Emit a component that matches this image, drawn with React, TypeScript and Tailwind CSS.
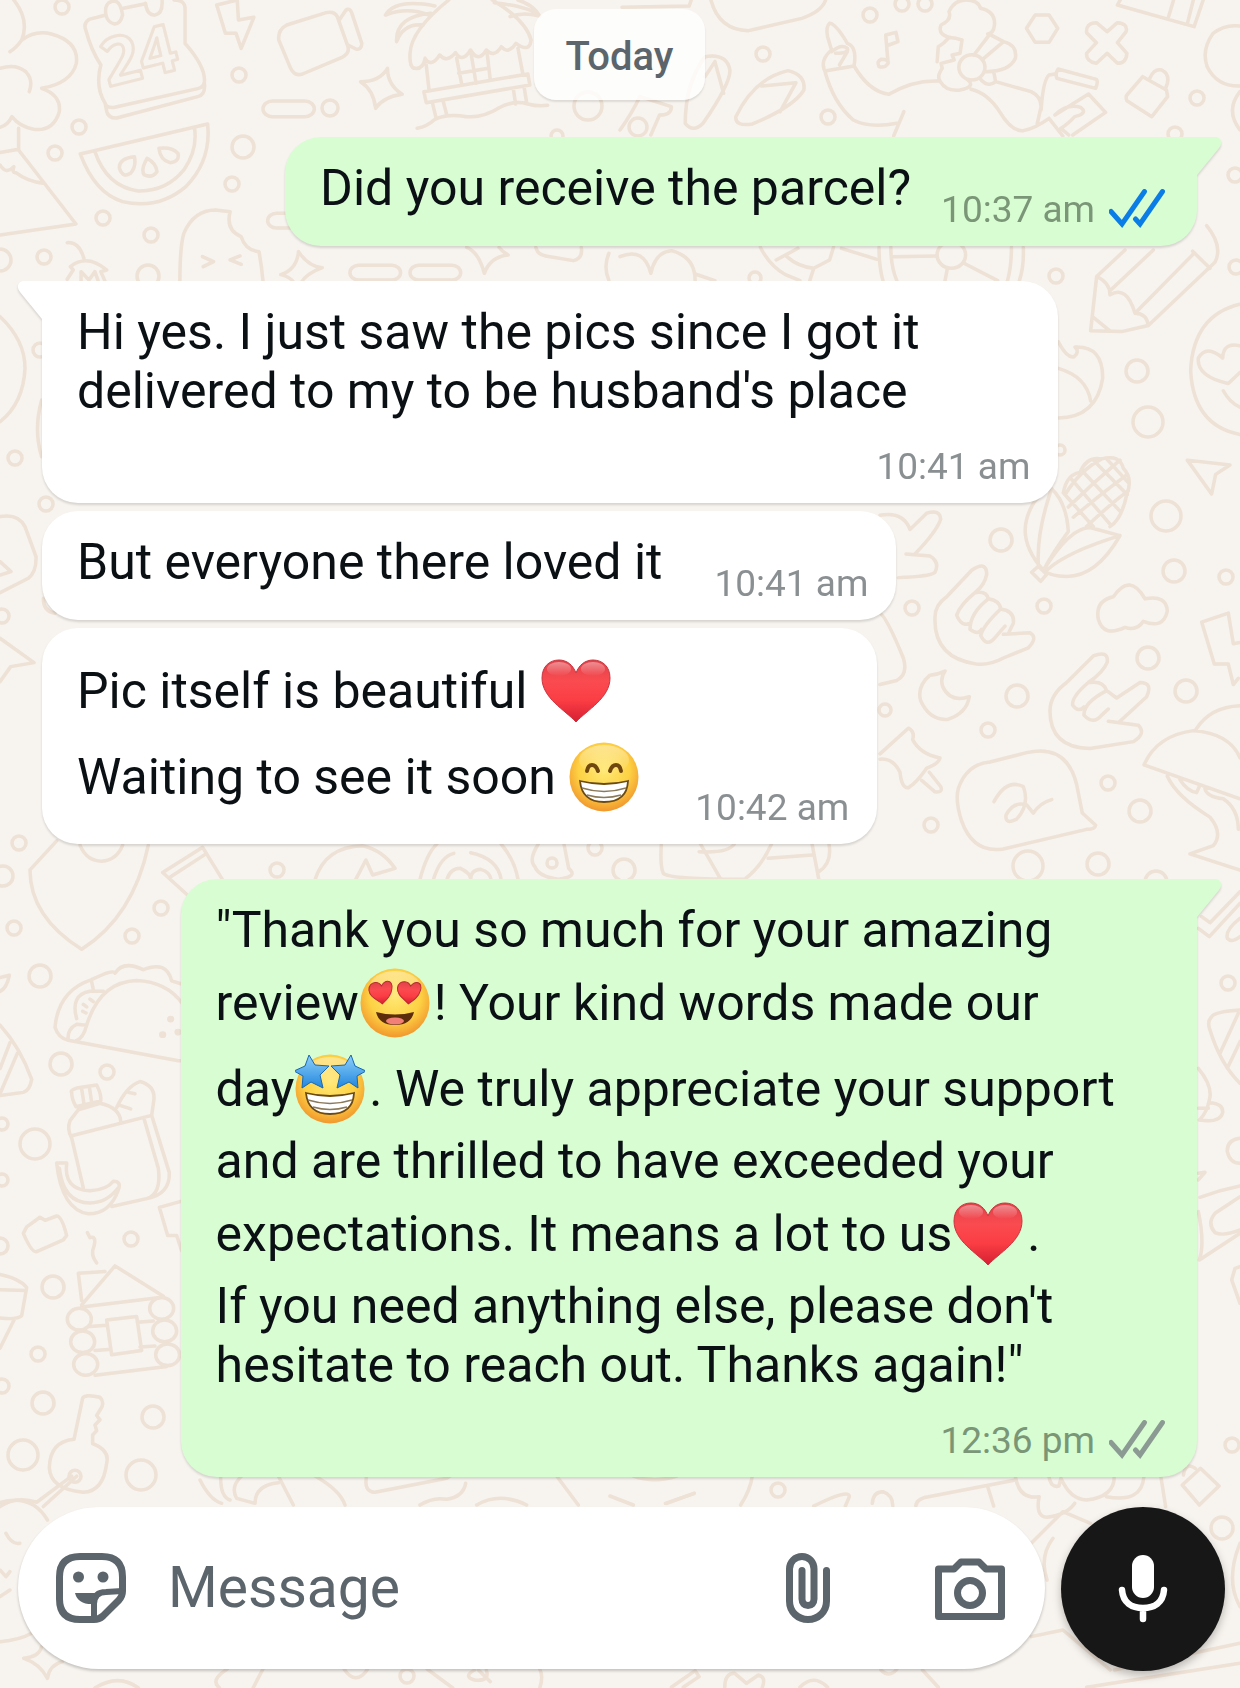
import type { ReactNode } from "react";

function Wallpaper() {
  const dots = [
    [62, 7, 7], [239, 75, 7], [330, 108, 8], [79, 127, 7], [55, 153, 7],
    [243, 147, 11], [232, 184, 7], [103, 218, 7], [151, 235, 7], [0, 260, 11],
    [44, 257, 7], [148, 276, 11], [588, 106, 14], [557, 136, 6], [870, 15, 7],
    [763, 54, 7], [828, 117, 7], [638, 127, 9], [1197, 98, 7], [1175, 134, 7],
    [1235, 175, 7], [755, 278, 6], [1056, 276, 7], [1236, 267, 7], [902, 4, 7],
    [925, 4, 7], [1137, 371, 11], [1148, 422, 15], [1166, 516, 15], [1001, 540, 11],
    [1174, 571, 11], [1226, 577, 7], [912, 608, 7], [1044, 606, 7], [1148, 658, 11],
    [1017, 696, 11], [1186, 691, 11], [885, 710, 6], [988, 730, 7], [1108, 783, 7],
    [1140, 811, 11], [931, 825, 7], [1098, 864, 11], [1028, 866, 15], [1156, 882, 11],
    [1060, 450, 5], [19, 843, 7], [3, 876, 10], [161, 908, 7], [14, 928, 7],
    [132, 936, 7], [40, 976, 11], [61, 1064, 11], [107, 1072, 7], [35, 1144, 15],
    [2, 1124, 6], [2, 1180, 6], [131, 1239, 7], [0, 1246, 8], [53, 1287, 11],
    [38, 1354, 7], [2, 1386, 7], [43, 1403, 11], [153, 1417, 11], [23, 1455, 15],
    [141, 1475, 15], [778, 1490, 7], [1232, 1445, 7], [1222, 1528, 11], [1228, 983, 7],
    [407, 1676, 7], [40, 350, 7], [15, 458, 7], [46, 504, 7], [2, 616, 7],
    [277, 870, 7], [595, 848, 7], [552, 863, 5], [624, 870, 11],
  ];

  return (
    <svg
      aria-hidden="true"
      className="absolute inset-0 h-full w-full"
      viewBox="0 0 1240 1688"
      preserveAspectRatio="xMidYMin slice"
      fill="none"
      stroke="#eee1d5"
      strokeWidth="3.5"
      strokeLinecap="round"
      strokeLinejoin="round"
    >
      {dots.map(([x, y, r], i) => (
        <circle key={i} cx={x} cy={y} r={r} />
      ))}

      <text
        x="108"
        y="87"
        transform="rotate(-14 108 87)"
        strokeWidth="3"
        className="font-['Open_Sans',sans-serif] text-[66px] font-bold"
      >
        24
      </text>

      {/* top left: tree, calendar, melon, hut */}
      <g transform="scale(.3954 .3333)">
        <path vectorEffect="non-scaling-stroke" d="M35 0Q75 60 55 120Q40 145 25 155M55 120Q90 90 130 102Q200 125 193 190Q180 250 105 265Q155 285 150 335Q135 395 85 388Q50 380 30 350Q20 375 0 382M0 205Q40 190 65 215Q85 240 74 275M47 385V450L192 672L0 705M0 458L47 448M0 495Q15 525 35 500Q30 520 40 518Q70 545 110 550" />
        <path vectorEffect="non-scaling-stroke" d="M268 45L225 58Q210 70 217 90Q230 150 255 195M312 25L365 12M440 0Q470 0 468 30V130Q520 200 517 245Q515 262 500 266L290 322Q268 325 266 310Q240 260 255 195M266 310L270 335Q275 355 295 354L500 290Q520 285 517 250M268 45Q262 5 290 3Q305 5 310 45Q305 72 290 72Q272 68 268 45ZM368 10Q372 47 392 45Q410 42 410 10V0" />
        <path vectorEffect="non-scaling-stroke" d="M548 15L600 0L603 60L642 52L610 145L597 100L570 100ZM725 75L825 38Q845 32 853 50L880 140Q885 160 865 172L765 222Q745 230 735 205L705 120Q702 90 725 75ZM858 60L875 30Q885 22 890 40L915 130Q915 150 900 147L880 135" />
        <path vectorEffect="non-scaling-stroke" d="M1135 0Q1040 90 1037 160Q1035 205 1050 205Q1070 208 1075 175Q1090 205 1112 165Q1130 190 1152 158Q1170 190 1190 150Q1210 190 1230 150Q1250 175 1268 140Q1285 165 1305 130Q1340 160 1343 120Q1330 60 1245 0M1100 18Q1000 -5 975 45Q1030 20 1085 45M1090 40Q1000 50 1003 125Q1020 70 1070 75M1250 8Q1340 20 1365 48Q1320 35 1290 50M1310 0Q1350 15 1365 48M1078 195L1085 270M1310 145L1322 220M1155 175L1168 255M1232 160L1240 240M1192 165L1204 250M1160 220L1235 205M1072 275L1335 222L1340 255L1078 308ZM1093 305L1103 355M1120 300L1130 345M1298 265L1304 312M1325 258L1332 308M1055 385Q1080 380 1100 358Q1130 340 1180 350Q1220 355 1265 322Q1300 300 1335 312Q1360 320 1385 316" />
        <path vectorEffect="non-scaling-stroke" d="M980 205Q980 255 1017 283Q970 290 950 325Q945 270 912 245Q960 245 980 205ZM203 462L525 372Q535 480 470 560Q400 630 310 605Q240 580 203 462ZM240 455Q270 560 350 573Q420 575 465 510Q500 450 492 385M340 470Q300 475 302 505Q310 535 330 520Q345 500 340 470ZM372 475Q355 510 365 525Q385 535 397 515Q395 490 372 475ZM402 445Q405 480 430 488Q455 485 450 460Q435 440 402 445Z" />
        <path vectorEffect="non-scaling-stroke" d="M455 842Q455 740 465 700Q490 630 545 630L582 635Q570 690 610 710Q620 750 655 755Q662 800 665 842M512 770L540 785L514 800M607 768L582 780L610 793M755 755Q780 800 815 803Q775 820 760 850M755 755Q750 810 710 824Q735 830 745 850M170 728Q200 725 212 775M170 838L185 810L178 800Q220 760 270 810L255 815L265 842M205 842V815L225 840L240 815L248 842M1355 742Q1360 765 1380 768L1450 782Q1475 775 1470 742M1540 760Q1525 800 1540 842M1180 742Q1210 755 1225 820Q1240 770 1285 765Q1270 755 1262 742" />
        <rect vectorEffect="non-scaling-stroke" x="665" y="303" width="130" height="47" rx="24" />
        <rect vectorEffect="non-scaling-stroke" x="677" y="640" width="110" height="44" rx="22" />
        <rect vectorEffect="non-scaling-stroke" x="885" y="796" width="128" height="44" rx="22" />
        <rect vectorEffect="non-scaling-stroke" x="1037" y="796" width="128" height="44" rx="22" />
      </g>

      {/* top right: sandals, dancer, tags */}
      <g transform="translate(620 0) scale(.3954 .3333)">
        <path vectorEffect="non-scaling-stroke" d="M230 0Q250 90 325 92L460 55Q510 35 520 0M5 22L175 18L180 0M215 170Q165 250 165 370Q185 400 210 370Q280 250 278 210Q270 160 215 170ZM240 185L262 280M240 185L215 230M425 212Q470 225 465 270Q440 320 335 372Q290 380 293 350Q340 235 425 212ZM358 258L445 248L405 335M0 390Q30 340 50 290L130 320Q130 345 100 345L78 405" />
        <path vectorEffect="non-scaling-stroke" d="M592 198Q600 140 575 130Q545 70 530 70Q520 80 525 110L535 150Q505 180 518 213Q540 310 590 360Q630 385 700 370M518 213L592 198Q630 275 680 283Q740 240 805 243M718 335L692 408M535 155Q560 130 575 145Q580 160 545 160M555 195L575 155M660 178Q680 178 678 190Q670 205 655 200Q648 185 660 178ZM678 190L672 105L698 97L703 125L680 135" />
        <path vectorEffect="non-scaling-stroke" d="M850 115Q800 110 812 75Q840 60 832 35Q845 0 875 0Q905 0 912 25Q950 35 947 75Q945 100 930 102M850 115L865 120L860 160L840 165L845 180L812 190L815 205Q800 230 810 245Q825 275 860 270Q900 260 880 240M895 165L935 103L970 125L920 175M970 125Q1005 135 1000 175Q985 215 925 215M910 235Q930 265 950 245L945 215M802 185L805 140Q820 130 830 115M950 245L1040 275Q1065 290 1065 320L1055 372M888 268Q930 280 960 335Q990 395 1020 392Q1050 385 1085 355M1065 330Q1070 240 1085 225L1100 222M1108 207L1205 238Q1210 245 1203 265L1105 235Q1100 220 1108 207ZM1145 405L1228 337L1185 282L1100 345Q1130 310 1165 322Q1185 340 1150 350Q1130 375 1115 385L1135 405M1085 355L1120 408" />
        <ellipse vectorEffect="non-scaling-stroke" cx="890" cy="202" rx="33" ry="38" />
        <path vectorEffect="non-scaling-stroke" d="M1050 45H1085L1107 85L1085 127H1050L1028 85ZM1205 68L1232 95L1258 68Q1285 70 1280 95L1258 128L1282 160Q1280 190 1258 190L1232 160L1205 190Q1178 185 1180 160L1205 128L1180 98Q1178 68 1205 68ZM1265 0L1258 15L1452 80L1475 0M1400 0L1387 52M1450 0L1435 70M1568 78Q1530 72 1500 100Q1470 150 1485 200Q1510 260 1568 258M1568 275Q1530 330 1568 390M1322 230L1382 270L1385 290L1345 350L1282 302Q1278 290 1282 285ZM1340 235Q1350 205 1370 210Q1395 225 1380 265" />
        <path vectorEffect="non-scaling-stroke" d="M0 770Q60 740 78 820Q90 755 130 752Q190 770 190 842M190 822L240 842M355 742Q380 800 420 825L455 842M422 770Q450 800 490 805L530 780L540 742M395 780L450 745M490 805L480 842M560 745L650 778M655 742Q655 800 665 842M685 742Q685 800 700 842M1020 742Q1022 800 1010 842M990 742Q990 800 980 842M690 770L800 768M870 790L955 842M828 805L822 842" />
        <ellipse vectorEffect="non-scaling-stroke" cx="838" cy="765" rx="36" ry="40" />
      </g>

      {/* right side: pencil, corn, hands, speech bubble, mushroom */}
      <g transform="translate(880 250) scale(.3333 .408)">
        <path vectorEffect="non-scaling-stroke" d="M632 198L650 65L735 0M650 65Q690 80 690 110Q740 85 765 155Q800 155 805 185L725 200L632 198M640 165L688 197M690 100L820 0M765 155L940 10M805 185L1005 30Q1030 -10 980 -60M938 3L990 45M1080 133Q940 160 932 295Q940 430 1080 452M1080 235Q1030 225 1028 265Q980 230 955 265Q950 310 1045 327L1080 300M1030 345Q1050 375 1080 385M535 225Q560 265 582 262Q600 250 585 238Q670 235 668 315Q650 410 535 412M535 290Q620 310 632 370" />
        <path vectorEffect="non-scaling-stroke" d="M490 785Q420 720 440 660Q460 600 515 585Q560 620 565 690Q520 740 490 785ZM475 770Q470 690 515 585M490 785Q570 680 630 680L720 700Q650 800 560 800Q510 800 490 785ZM500 785Q560 740 720 700M455 790L475 775L500 795L482 812ZM550 595Q560 550 600 545Q620 505 665 512Q720 500 730 535Q760 560 740 600Q725 660 690 678M550 595L640 678M575 562L690 672M605 540L720 640M640 515L742 600M680 512L745 570M555 600Q600 540 665 512M565 630Q640 570 720 515M580 655Q660 600 742 550M620 678Q680 630 745 590M922 515L1050 527L1007 550L995 598Z" />
        <path vectorEffect="non-scaling-stroke" d="M90 685L140 645Q180 635 182 660Q170 690 105 745M78 745L150 750Q180 765 165 790Q150 800 55 803M0 650Q70 640 90 685M165 900Q165 870 200 850L275 785Q320 760 320 795Q315 820 285 840Q240 870 230 895Q245 925 270 915M165 900Q160 1000 290 1015Q330 1018 370 1000L445 975Q475 950 450 938L370 942M285 840Q320 835 325 855Q360 860 362 880Q405 885 400 915L385 940M325 855Q270 890 270 930Q295 945 305 930M362 880Q310 920 302 945Q320 975 345 950L375 922M510 1130Q510 1090 560 1060L640 995Q685 980 682 1010Q670 1035 625 1060Q575 1095 578 1115Q595 1135 612 1120M510 1130Q510 1220 630 1222L760 1205Q800 1185 775 1165L685 1155M720 1155L800 1095Q820 1060 780 1060L710 1098L680 1080Q670 1055 630 1060M680 1080Q610 1110 612 1140Q640 1165 665 1140L685 1125" />
        <path vectorEffect="non-scaling-stroke" d="M700 850Q750 790 795 855Q860 845 862 885Q850 930 790 910Q770 935 735 925Q670 950 655 905Q645 860 700 850ZM1080 962L1060 965L1045 890L965 912L1003 1015L1045 1015L1060 1065L1075 1050M195 1032Q175 1040 150 1042Q110 1070 122 1105Q150 1155 205 1150Q260 1135 268 1095Q210 1110 188 1070Q180 1050 195 1032ZM0 890Q20 900 70 1000Q85 1040 50 1055L0 1065M0 1235L85 1172Q105 1180 98 1200Q120 1235 180 1245Q175 1260 140 1270Q110 1305 85 1318Q65 1320 60 1280Q40 1245 0 1248M125 1300L165 1328Q190 1330 182 1315L148 1280" />
        <path vectorEffect="non-scaling-stroke" d="M235 1320Q260 1260 330 1255L440 1232Q560 1210 590 1310L607 1380L647 1410Q645 1420 620 1420L370 1468Q280 1480 245 1400Q225 1350 235 1320ZM342 1352Q380 1295 430 1315Q450 1360 410 1395Q375 1410 378 1385Q400 1350 440 1360L460 1380Q480 1355 515 1347M792 1262Q830 1190 940 1178Q1050 1185 1080 1245M792 1262L1080 1345M948 1175Q990 1120 1080 1117M862 1290Q890 1340 990 1390Q1030 1430 1000 1460L930 1480L1080 1520M900 1298Q920 1325 950 1330L958 1315M975 1320Q980 1340 1030 1345Q1075 1370 1075 1420" />
      </g>
      <g transform="translate(1140 860) scale(.3333)">
        <path vectorEffect="non-scaling-stroke" d="M185 170L210 188L300 95M175 205L208 230L300 130M300 175Q255 210 262 235Q275 250 300 230M300 450Q225 455 215 470Q200 485 210 510Q240 610 300 670M240 580L295 460M262 625L300 545M175 625Q220 680 208 720Q200 760 178 780M175 745H205M208 728Q250 730 248 758Q240 790 180 780M300 835Q260 840 262 875Q270 910 300 910M175 940L195 937L175 960M180 1012Q240 990 300 978M300 1010L225 1060Q200 1090 225 1118Q250 1130 300 1110M175 1055Q195 1150 178 1200L300 1120M300 1220L285 1225L275 1260L300 1330" />
      </g>

      {/* left edge */}
      <g transform="translate(0 250) scale(.3333)">
        <path vectorEffect="non-scaling-stroke" d="M0 200Q75 270 75 355Q70 460 0 515M0 800Q55 790 75 830L108 920Q110 965 85 985L0 1028M0 935L33 965L0 975M0 1165L102 1238L32 1250L0 1295M125 450Q100 540 125 620M130 1045Q130 1085 165 1090" />
      </g>
      <g transform="translate(0 830) scale(.3333 .4337)">
        <path vectorEffect="non-scaling-stroke" d="M170 25L90 92Q90 200 245 275Q400 200 445 35M240 35Q260 72 305 72Q350 70 368 35M570 155L488 98L608 40L668 115M512 108L618 55M165 455Q175 370 275 345Q340 320 345 330Q370 300 430 322Q500 300 515 348L545 355M165 455Q175 480 205 485L535 532H548M260 450Q300 350 410 347Q500 350 547 400M275 350L280 368M230 435Q210 380 270 372H310M205 485Q200 460 230 448L260 450Q250 480 230 485M250 402L260 408M270 390L280 396M248 418L258 422M0 340L28 335Q20 365 0 372M0 450Q60 500 95 575Q90 600 70 605L0 612M30 490L0 550M52 515L0 608" />
        <ellipse cx="512" cy="436" rx="9" ry="6" fill="#eee1d5" />
        <ellipse cx="488" cy="472" rx="9" ry="6" fill="#eee1d5" />
        <ellipse cx="534" cy="466" rx="9" ry="6" fill="#eee1d5" />
        <path vectorEffect="non-scaling-stroke" d="M215 605Q210 600 230 595L290 588Q305 610 302 625L228 638Q215 620 215 605ZM245 597L252 632M268 592L275 628M235 645L210 670Q200 690 215 710L250 825M235 645L300 630Q360 640 362 672M215 705L455 658M350 640Q380 590 420 580Q465 590 462 620L455 658L508 790Q510 840 440 850L335 868M432 665L475 780Q485 840 440 850M385 605L405 608M360 635L392 643M170 768H200Q190 830 270 832Q320 830 340 810Q365 810 355 830Q330 885 265 885Q185 875 170 768ZM178 780Q190 860 270 860Q320 860 355 825M70 930L80 915L120 893L135 900L170 890Q185 890 200 935L190 945L110 972Q95 975 70 930ZM262 928L270 940Q290 935 282 960Q270 980 290 998M548 855L478 870L503 935H530L545 970" />
        <path vectorEffect="non-scaling-stroke" d="M245 1095L345 1005L490 1075M245 1100L480 1078M315 1018L235 1022L245 1085M270 1145L320 1142M412 1135L460 1132M285 1200L325 1198M420 1192L465 1190M285 1257L500 1237M320 1130L410 1122L425 1200L335 1210ZM0 1025Q60 1035 80 1055L65 1120Q50 1130 0 1125M0 1060L78 1062M42 1130L0 1195M222 1405L248 1310Q255 1300 300 1308Q315 1320 302 1335L290 1350L300 1360L285 1372L290 1385L278 1395V1415Q330 1430 320 1460Q310 1525 250 1527Q150 1520 148 1470Q150 1410 222 1405ZM230 1490L130 1560M215 1490L110 1550M0 1560Q50 1535 110 1550" />
        <ellipse vectorEffect="non-scaling-stroke" cx="238" cy="1128" rx="36" ry="25" />
        <ellipse vectorEffect="non-scaling-stroke" cx="248" cy="1180" rx="36" ry="25" />
        <ellipse vectorEffect="non-scaling-stroke" cx="257" cy="1232" rx="36" ry="25" />
        <ellipse vectorEffect="non-scaling-stroke" cx="485" cy="1103" rx="36" ry="25" />
        <ellipse vectorEffect="non-scaling-stroke" cx="494" cy="1155" rx="36" ry="25" />
        <ellipse vectorEffect="non-scaling-stroke" cx="503" cy="1210" rx="36" ry="25" />
        <ellipse vectorEffect="non-scaling-stroke" cx="225" cy="1490" rx="18" ry="14" />
      </g>

      {/* strip above the last message */}
      <g transform="translate(180 840) scale(.676 .3333)">
        <path vectorEffect="non-scaling-stroke" d="M200 118Q215 20 270 17Q300 30 318 85L285 105L275 60L260 118M355 118Q365 40 380 12M375 118Q385 50 405 40M395 118Q400 85 415 85Q430 100 430 118Q430 90 445 88Q458 95 460 118M430 38Q470 55 475 118M475 12Q495 60 500 118M530 12Q515 60 525 80Q530 110 560 118Q590 110 575 85L568 12M712 12Q710 80 715 100Q725 118 835 118Q860 80 875 12M770 12L800 118M768 35Q810 40 820 12M870 55L935 45M935 12L945 118M960 12Q965 70 945 95" />
      </g>

      {/* around the composer */}
      <g transform="translate(200 1470) scale(.3333)">
        <path vectorEffect="non-scaling-stroke" d="M0 30Q30 90 65 100M62 15Q60 80 90 90M125 18Q90 50 110 85L165 100Q165 45 235 38M235 18L280 105M345 18Q420 60 435 105M500 18Q490 65 525 67L740 25L755 15M660 105Q700 80 740 88Q790 80 797 40M830 105Q900 65 980 105M1070 18L1135 105M1300 18Q1365 40 1430 18M1230 78L1300 105M1400 100L1482 70" />
      </g>
      <g transform="translate(620 1400) scale(.3954 .3333)">
        <path vectorEffect="non-scaling-stroke" d="M335 225Q330 270 305 315M115 310L188 280M490 318Q580 265 580 290L570 318M638 310Q640 275 665 275Q690 285 690 318M748 318Q750 295 780 290L1000 240M930 260L945 318M1000 230Q1010 300 1060 290Q1050 350 1080 352Q1130 345 1150 310M1085 230Q1090 265 1110 258L1115 235Q1140 300 1180 300Q1250 290 1250 230M1230 290Q1320 310 1325 230M1368 230L1380 320M1190 370L1120 335L1040 430M1080 540Q1060 470 1095 415M1468 205L1515 258L1465 315L1422 255ZM1425 225Q1430 185 1455 205M1040 710L1120 690L1240 810M1568 730L1250 810M1180 862L1568 790M1568 430Q1530 540 1568 620M130 862L190 812L200 830L160 862M265 862Q265 820 290 820L320 850L350 825Q370 830 360 862M455 862Q490 820 525 862M765 810L805 862M660 810Q680 835 700 808" />
      </g>
      <g transform="translate(0 1490) scale(.3954 .3333)">
        <path vectorEffect="non-scaling-stroke" d="M0 38Q80 10 120 90M15 130Q30 165 50 160M0 240L15 260L25 245M0 320L25 300M0 455Q50 450 80 430M105 470Q100 500 60 505Q100 520 120 565Q125 525 158 515M240 594Q300 550 350 594M575 537Q530 570 555 594M665 537L640 594M870 537Q900 590 930 537M1080 537L1145 594M1200 540Q1170 560 1200 570Q1240 575 1230 540M1210 540L1240 575M1365 537Q1375 560 1365 594" />
      </g>
    </svg>
  );
}

function EmojiGradients() {
  return (
    <svg aria-hidden="true" className="absolute h-0 w-0">
      <defs>
        <radialGradient id="face" cx=".5" cy=".4" r=".62">
          <stop offset="0" stopColor="#ffe874" />
          <stop offset=".6" stopColor="#fdd143" />
          <stop offset="1" stopColor="#f0922b" />
        </radialGradient>
        <linearGradient id="shine" x1="0" y1="0" x2="0" y2="1">
          <stop offset="0" stopColor="#fff" stopOpacity=".4" />
          <stop offset="1" stopColor="#fff" stopOpacity="0" />
        </linearGradient>
        <linearGradient id="heart" x1="0" y1="0" x2="0" y2="1">
          <stop offset="0" stopColor="#e0424a" />
          <stop offset=".35" stopColor="#fa4b50" />
          <stop offset=".65" stopColor="#fb3d44" />
          <stop offset="1" stopColor="#d51f33" />
        </linearGradient>
        <linearGradient id="star" x1="0" y1="0" x2="0" y2="1">
          <stop offset="0" stopColor="#8fd0fa" />
          <stop offset="1" stopColor="#2187dd" />
        </linearGradient>
      </defs>
    </svg>
  );
}

function Emoji({ label, children }: { label: string; children: ReactNode }) {
  return (
    <svg
      role="img"
      aria-label={label}
      viewBox="0 0 70 70"
      className="mr-1 ml-px inline-block h-[86px] w-[70px] py-2 align-[-26px]"
    >
      {children}
    </svg>
  );
}

function Face() {
  return (
    <>
      <circle cx="35" cy="35" r="34.500" fill="url(#face)" />
      <ellipse cx="35" cy="18" rx="25" ry="15" fill="url(#shine)" />
    </>
  );
}

function Grin() {
  return (
    <>
      <path d="M11 39Q35 45 59 39Q58 60 35 60Q13 60 11 39Z" fill="#fff" stroke="#6b4a14" strokeWidth="1.800" />
      <path d="M13 46Q35 53 57 46M18 53Q35 58 52 53" fill="none" stroke="#8b7a5a" strokeWidth="1.500" />
    </>
  );
}

function HeartEmoji() {
  return (
    <Emoji label="red heart">
      <path
        d="M35 66C24 54 1 42 1 22C1 10 9 4 18 4C26 4 32 9 35 17C38 9 44 4 52 4C61 4 69 10 69 22C69 42 46 54 35 66Z"
        fill="url(#heart)"
        stroke="#c9353f"
        strokeWidth="1"
      />
      <ellipse cx="18" cy="13" rx="12" ry="7" fill="url(#shine)" />
      <ellipse cx="52" cy="13" rx="12" ry="7" fill="url(#shine)" />
    </Emoji>
  );
}

function BeamingEmoji() {
  return (
    <Emoji label="beaming face">
      <Face />
      <g fill="none" stroke="#70460f" strokeWidth="4" strokeLinecap="round">
        <path d="M18 29Q19 23 23 23Q27 23 29 29" />
        <path d="M41 29Q43 23 47 23Q51 23 52 29" />
      </g>
      <Grin />
    </Emoji>
  );
}

function HeartEyesEmoji() {
  const eye = "M0 23C-5 18 -12 15 -12 8C-12 3 -8 1 -5 1C-2 1 0 3 1 5C3 2 5 1 7 1C11 1 12 5 11 9C10 15 5 19 0 23Z";
  return (
    <Emoji label="smiling face with heart eyes">
      <Face />
      <path d={eye} transform="translate(20 13) rotate(-6)" fill="url(#heart)" stroke="#b52c32" strokeWidth="1" />
      <path d={eye} transform="translate(50 13) rotate(4)" fill="url(#heart)" stroke="#b52c32" strokeWidth="1" />
      <path d="M16 44Q35 49 54 44Q51 57 35 57Q19 57 16 44Z" fill="#5c2d0c" />
      <ellipse cx="35" cy="53" rx="9" ry="3.500" fill="#f18178" />
    </Emoji>
  );
}

function StarStruckEmoji() {
  const star = "M-3 -16L3 -6L17 -5L8 4L11 17L-1 11L-10 17L-9 5L-18 0L-7 -5Z";
  return (
    <Emoji label="star-struck">
      <Face />
      <path d={star} transform="translate(17 17)" fill="url(#star)" stroke="#1767b5" strokeWidth="1" />
      <path d={star} transform="translate(53 17) scale(-1 1)" fill="url(#star)" stroke="#1767b5" strokeWidth="1" />
      <Grin />
    </Emoji>
  );
}

function Ticks({ read }: { read: boolean }) {
  return (
    <svg
      role="img"
      aria-label={read ? "Read" : "Delivered"}
      viewBox="0 0 56 42"
      className={`h-[42px] w-14 ${read ? "text-[#0b7de6]" : "text-[#8b9a93]"}`}
      fill="none"
      stroke="currentColor"
      strokeWidth="5"
      strokeLinecap="round"
    >
      <path d="M2 22.500L13 35L35.500 2.500" strokeLinejoin="miter" />
      <path d="M26.500 30L31 35L53.500 2.500" strokeLinejoin="miter" />
    </svg>
  );
}

type BubbleProps = {
  time: string;
  out?: boolean;
  tail?: boolean;
  stacked?: boolean;
  // first line holds an emoji, which already brings its own headroom
  tall?: boolean;
  status?: "read" | "delivered";
  children: ReactNode;
};

function Bubble({ time, out, tail, stacked, tall, status, children }: BubbleProps) {
  const side = out
    ? "self-end bg-[#d8fdd2] pr-8 text-[#d8fdd2]"
    : "self-start bg-white pr-7 text-white";
  const corner = !tail ? "" : out ? "rounded-tr-none" : "rounded-tl-none";
  const flow = stacked ? "flex-col items-end gap-6" : out ? "items-end gap-[30px]" : "items-end gap-[52px]";
  const bottom = stacked ? "w-full" : tall ? "mb-[10px]" : "mb-[14px]";

  return (
    <li
      className={`relative flex max-w-[88%] rounded-[36px] pb-[14px] pl-[35px] drop-shadow-[0_2px_1px_rgba(0,0,0,0.13)] ${tall ? "pt-5" : "pt-[22px]"} ${side} ${corner} ${flow}`}
    >
      {tail && (
        <svg
          aria-hidden="true"
          viewBox="0 0 26 40"
          className={`absolute top-0 h-10 w-[26px] ${out ? "left-full" : "right-full -scale-x-100"}`}
          fill="currentColor"
        >
          <path d="M0 0H18C24 0 26 6 22 11L0 38Z" />
        </svg>
      )}
      <div className={`text-[50px] leading-[59px] text-[#0a1014] ${bottom}`}>{children}</div>
      <div className="flex shrink-0 items-center gap-[14px]">
        <time className={`text-[37px] leading-[44px] ${out ? "text-[#7a9677]" : "text-[#8a8f92]"}`}>
          {time}
        </time>
        {status && <Ticks read={status === "read"} />}
      </div>
    </li>
  );
}

function StickerIcon() {
  return (
    <svg aria-hidden="true" viewBox="0 0 70 70" className="size-[70px]" fill="none" stroke="currentColor" strokeWidth="7">
      <path d="M24 3.500H46Q66.500 3.500 66.500 24V38Q66.500 43 63 47L47 63Q43 66.500 38 66.500H24Q3.500 66.500 3.500 46V24Q3.500 3.500 24 3.500Z" />
      <path d="M38 65V51Q38 39 50 39L66 38" strokeWidth="6" />
      <path d="M19 40H46L38 51Q22 52 19 40Z" fill="currentColor" stroke="none" />
      <circle cx="22.500" cy="24" r="5.500" fill="currentColor" stroke="none" />
      <circle cx="47" cy="24" r="5.500" fill="currentColor" stroke="none" />
    </svg>
  );
}

function ClipIcon() {
  return (
    <svg aria-hidden="true" viewBox="0 0 70 70" className="size-[70px]" fill="none" stroke="currentColor" strokeWidth="7" strokeLinecap="round">
      <path d="M53.500 17.500V48C53.500 59 45 66.500 35 66.500C25 66.500 16.500 59 16.500 48V16C16.500 9 22 3.500 29 3.500C36 3.500 41 9 41 16V46C41 50 38.500 52.500 35 52.500C31.500 52.500 29 50 29 46V17.500" />
    </svg>
  );
}

function CameraIcon() {
  return (
    <svg aria-hidden="true" viewBox="0 0 70 70" className="size-[70px]" fill="none" stroke="currentColor" strokeWidth="7" strokeLinejoin="round">
      <path d="M3.500 16H19L26 9H44L51 16H66.500V63.500H3.500Z" />
      <circle cx="35" cy="40" r="12.500" />
    </svg>
  );
}

function MicIcon() {
  return (
    <svg aria-hidden="true" viewBox="0 0 50 68" className="h-[68px] w-[50px]" fill="none" stroke="currentColor" strokeWidth="6.500" strokeLinecap="round">
      <rect x="14" y="0" width="22" height="43" rx="11" fill="currentColor" stroke="none" />
      <path d="M4 35C5 48 14 53 25 53C36 53 45 48 46 35M25 53V64" />
    </svg>
  );
}

export default function App() {
  return (
    <div className="relative flex min-h-screen flex-col overflow-hidden bg-[#f7f3ee] font-[Roboto,'Liberation_Sans',sans-serif]">
      <Wallpaper />
      <EmojiGradients />

      <main className="relative flex flex-col pt-[9px] pr-[43px] pb-7 pl-[42px]">
        <h2 className="self-center rounded-[22px] bg-white/80 px-8 pt-6 pb-5 text-[40px] leading-[47px] font-medium text-[#5b656b] shadow-[0_2px_2px_rgba(0,0,0,0.1)]">
          Today
        </h2>

        <ul className="mt-[37px] flex flex-col gap-[35px]">
          <Bubble out tail time="10:37 am" status="read">
            Did you receive the parcel?
          </Bubble>

          <li>
            <ul className="flex flex-col gap-2">
              <Bubble tail stacked time="10:41 am">
                Hi yes. I just saw the pics since I got it delivered to my to be husband's place
              </Bubble>
              <Bubble time="10:41 am">But everyone there loved it</Bubble>
              <Bubble tall time="10:42 am">
                Pic itself is beautiful <HeartEmoji />
                <br />
                Waiting to see it soon <BeamingEmoji />
              </Bubble>
            </ul>
          </li>

          <Bubble out tail stacked time="12:36 pm" status="delivered">
            "Thank you so much for your amazing review
            <HeartEyesEmoji />! Your kind words made our{" "}
            <span className="whitespace-nowrap">
              day
              <StarStruckEmoji />.
            </span>{" "}
            We truly appreciate your support and are thrilled to have exceeded your expectations. It
            means a lot to us
            <HeartEmoji />.
            <br />
            If you need anything else, please don't hesitate to reach out. Thanks again!"
          </Bubble>
        </ul>
      </main>

      <form
        className="relative mt-auto flex items-start gap-4 pr-[15px] pb-[17px] pl-[18px]"
        onSubmit={(e) => e.preventDefault()}
      >
        <div className="flex h-[162px] min-w-0 flex-1 items-center rounded-full bg-white pr-10 pl-[38px] text-[#5b656b] shadow-[0_2px_3px_rgba(0,0,0,0.2)]">
          <button type="button" aria-label="Stickers" className="shrink-0">
            <StickerIcon />
          </button>
          <input
            type="text"
            aria-label="Message"
            placeholder="Message"
            className="ml-[42px] min-w-0 flex-1 bg-transparent text-[57px] leading-[66px] outline-none placeholder:text-[#5b656b]"
          />
          <button type="button" aria-label="Attach" className="shrink-0">
            <ClipIcon />
          </button>
          <button type="button" aria-label="Camera" className="ml-[92px] shrink-0">
            <CameraIcon />
          </button>
        </div>
        <button
          type="button"
          aria-label="Record voice message"
          className="flex size-[164px] shrink-0 items-center justify-center rounded-full bg-[#171717] text-white shadow-[0_4px_8px_rgba(0,0,0,0.25)]"
        >
          <MicIcon />
        </button>
      </form>
    </div>
  );
}
